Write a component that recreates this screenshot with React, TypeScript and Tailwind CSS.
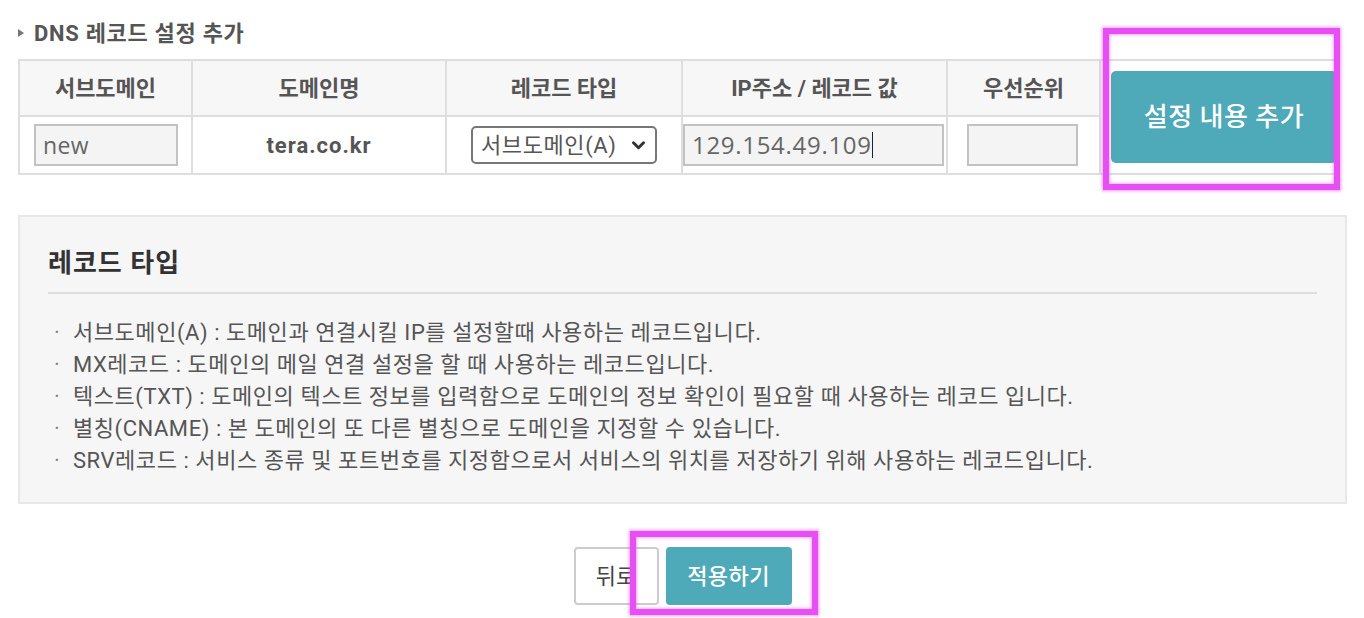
import React from "react";

const recordTypes = [
  "서브도메인(A) : 도메인과 연결시킬 IP를 설정할때 사용하는 레코드입니다.",
  "MX레코드 : 도메인의 메일 연결 설정을 할 때 사용하는 레코드입니다.",
  "텍스트(TXT) : 도메인의 텍스트 정보를 입력함으로 도메인의 정보 확인이 필요할 때 사용하는 레코드 입니다.",
  "별칭(CNAME) : 본 도메인의 또 다른 별칭으로 도메인을 지정할 수 있습니다.",
  "SRV레코드 : 서비스 종류 및 포트번호를 지정함으로서 서비스의 위치를 저장하기 위해 사용하는 레코드입니다.",
];

const headers = [
  { label: "서브도메인", w: "w-[173px]" },
  { label: "도메인명", w: "w-[254px]" },
  { label: "레코드 타입", w: "w-[236px]" },
  { label: "IP주소 / 레코드 값", w: "w-[265px]" },
  { label: "우선순위", w: "w-[153px]" },
];

const Highlight = ({ className }: { className: string }) => (
  <div
    className={`absolute pointer-events-none border-[6px] border-[#e650f2] shadow-[0_0_3px_1px_rgba(230,80,242,0.6),inset_0_0_3px_1px_rgba(230,80,242,0.5)] ${className}`}
  />
);

export default function App() {
  return (
    <div className="relative w-[1364px] h-[618px] overflow-hidden bg-white font-[Roboto,'Noto_Sans_CJK_KR',sans-serif] text-[#555]">
      <div className="pl-[18px] pt-[20px]">
        {/* title */}
        <div className="flex items-center h-[26px] gap-[10px]">
          <svg width="6" height="8" viewBox="0 0 6 8">
            <path d="M0 0 L6 4 L0 8 Z" fill="#777" />
          </svg>
          <span className="text-[22px] font-bold text-[#555] tracking-[0.7px]">DNS 레코드 설정 추가</span>
        </div>

        <table className="mt-[13px] w-[1322px] border-collapse table-fixed">
          <tbody>
            <tr className="h-[56px]">
              {headers.map((h) => (
                <th
                  key={h.label}
                  className={`${h.w} border-2 border-[#dedede] bg-[#f7f7f7] text-[22px] font-bold text-[#555] text-center align-middle`}
                >
                  {h.label}
                </th>
              ))}
              <td rowSpan={2} className="border-y-2 border-[#dedede] bg-white align-middle pl-[10px]">
                <button className="w-[226px] h-[92px] rounded-[5px] bg-[#4ea9b8] text-white text-[26px] tracking-[0.5px] font-medium">
                  설정 내용 추가
                </button>
              </td>
            </tr>
            <tr className="h-[58px]">
              <td className="border-2 border-[#dedede] pl-[14px]">
                <div className="w-[144px] h-[42px] border-2 border-[#c2c2c2] bg-[#f4f4f4] flex items-center pl-[7px] text-[23px] tracking-[0.4px] text-[#666] font-['Open_Sans','Noto_Sans_CJK_KR',sans-serif]">
                  new
                </div>
              </td>
              <td className="border-2 border-[#dedede] text-center text-[22px] tracking-[1px] font-bold text-[#555]">tera.co.kr</td>
              <td className="border-2 border-[#dedede] pl-[24px]">
                <div className="w-[186px] h-[38px] border-2 border-[#777] rounded-[5px] bg-white flex items-center justify-between pl-[8px] pr-[9px] text-[22px] tracking-[0.6px] text-[#555]">
                  <span>서브도메인(A)</span>
                  <svg width="15" height="11" viewBox="0 0 16 12">
                    <path d="M2.5 3 L8 8.5 L13.5 3" stroke="#333" strokeWidth="3.2" fill="none" strokeLinecap="round" strokeLinejoin="round" />
                  </svg>
                </div>
              </td>
              <td className="border-2 border-[#dedede] pl-0">
                <div className="w-[261px] h-[42px] border-2 border-[#c2c2c2] bg-[#f4f4f4] flex items-center pl-[7px] text-[24px] tracking-[0.7px] text-[#666] font-['Open_Sans','Noto_Sans_CJK_KR',sans-serif]">
                  <span>129.154.49.109</span>
                  <span className="w-[1.5px] h-[26px] bg-[#222]" />
                </div>
              </td>
              <td className="border-2 border-[#dedede] pl-[19px]">
                <div className="w-[111px] h-[42px] border-2 border-[#c2c2c2] bg-[#f4f4f4]" />
              </td>
            </tr>
          </tbody>
        </table>

        {/* record type info box */}
        <div className="mt-[40px] w-[1329px] h-[289px] border-2 border-[#e8e8e8] bg-[#f6f6f6] px-[28px] pt-[26px]">
          <h3 className="text-[26px] tracking-[1px] font-bold text-[#333] leading-[40px]">레코드 타입</h3>
          <div className="mt-[9px] h-[2px] bg-[#dddddd]" />
          <ul className="mt-[22px]">
            {recordTypes.map((t) => (
              <li key={t} className="flex items-center h-[32px] text-[22px] text-[#555] tracking-[0.55px]">
                <span className="w-[25px] pl-[6px] text-[#888]">·</span>
                <span>{t}</span>
              </li>
            ))}
          </ul>
        </div>

        <div className="w-[1329px] mt-[43px] flex justify-center gap-[7px]">
          <button className="w-[85px] h-[58px] rounded-[4px] border-2 border-[#cccccc] bg-white text-[22px] text-[#444]">뒤로</button>
          <button className="w-[126px] h-[58px] rounded-[4px] bg-[#4ea9b8] text-[22px] tracking-[0.4px] text-white font-medium">적용하기</button>
        </div>
      </div>

      <Highlight className="left-[1103px] top-[28px] w-[237px] h-[162px]" />
      <Highlight className="left-[630px] top-[531px] w-[188px] h-[84px]" />
    </div>
  );
}
